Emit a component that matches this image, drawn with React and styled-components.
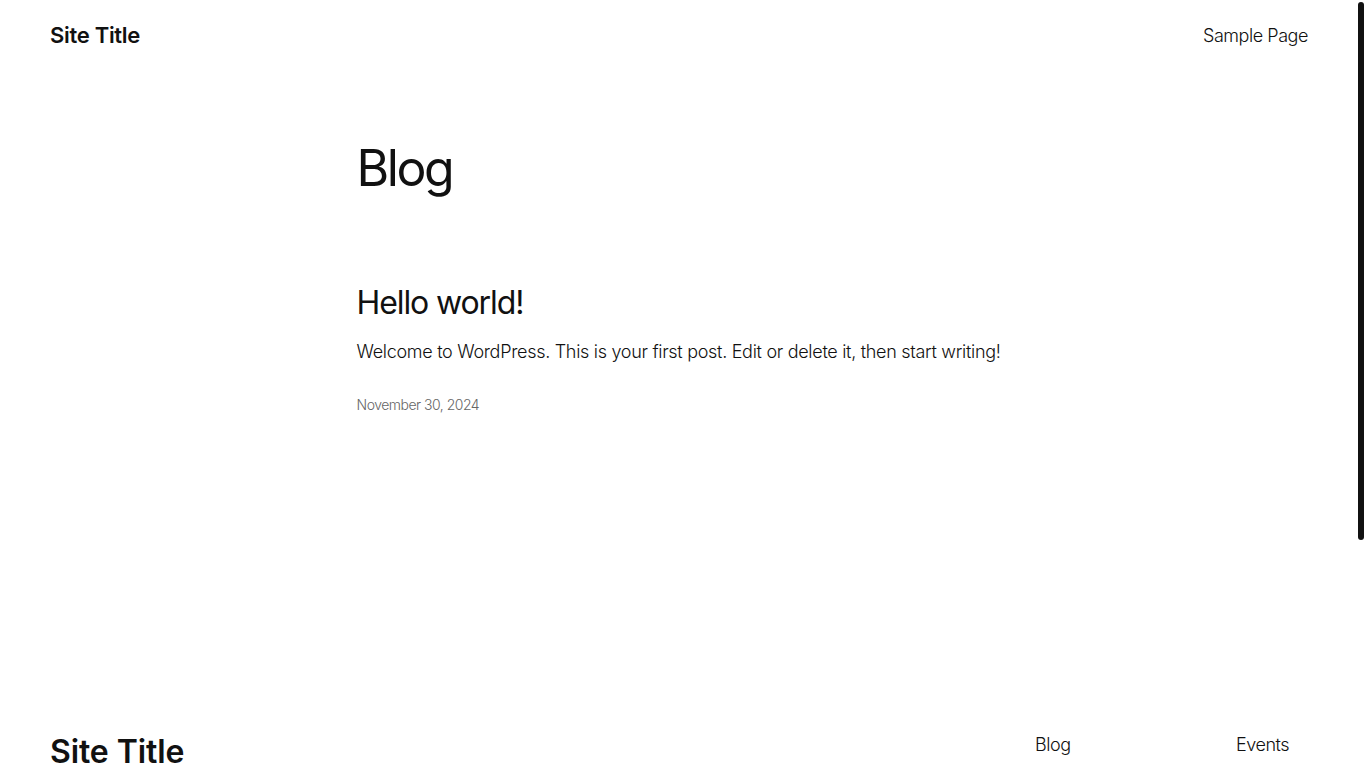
import styled, { createGlobalStyle } from 'styled-components';

const GlobalStyle = createGlobalStyle`
  body {
    margin: 0;
    background: #fff;
    color: #111;
    font-family: Inter, 'Noto Sans', sans-serif;
    font-weight: 300;
    font-size: 18px;
    -webkit-font-smoothing: antialiased;
  }

  a {
    color: inherit;
    text-decoration: none;
  }
`;

// the page keeps an 8px gutter on the right for the scroll track
const Page = styled.div`
  margin-right: 8px;
`;

const ScrollThumb = styled.div`
  position: fixed;
  top: 2px;
  right: 2px;
  width: 6px;
  height: 538px;
  border-radius: 3px;
  background: #111;
`;

const Header = styled.header`
  display: flex;
  justify-content: space-between;
  align-items: center;
  padding: 20px 50px;
  height: 30px;
`;

const SiteTitle = styled.a`
  font-size: ${(props) => (props.large ? '32px' : '22px')};
  font-weight: 600;
  line-height: 1.1;
  letter-spacing: ${(props) => (props.large ? '-0.1px' : '-0.3px')};
`;

const NavLink = styled.a`
  font-size: 18px;
  font-weight: 300;
  letter-spacing: -0.45px;
`;

const Main = styled.main`
  width: 645px;
  margin: 0 auto;
  padding: 68px 0 0;
  min-height: 576px;
`;

const PageTitle = styled.h1`
  margin: 0 0 86px;
  font-size: 50px;
  font-weight: 400;
  line-height: 1.2;
  letter-spacing: -2.4px;
`;

const Post = styled.article`
  display: flex;
  flex-direction: column;
`;

const PostTitle = styled.h2`
  margin: 0;
  font-size: 32px;
  font-weight: 400;
  line-height: 1.2;
  letter-spacing: -1.1px;
`;

const Excerpt = styled.p`
  margin: 16px 0 0;
  font-size: 18px;
  line-height: 1.6;
  letter-spacing: -0.3px;
`;

const PostDate = styled.time`
  margin-top: 29px;
  font-size: 14px;
  color: #666;
  letter-spacing: -0.5px;
`;

const Footer = styled.footer`
  display: flex;
  justify-content: space-between;
  align-items: flex-start;
  padding: 20px 50px 120px;
`;

const FooterNav = styled.nav`
  display: flex;
  gap: 131px;
  padding-right: 2px;
`;

const NavColumn = styled.ul`
  list-style: none;
  margin: 0;
  padding: 0;
  display: flex;
  flex-direction: column;
  gap: 14px;
  min-width: 70px;
`;

const App = () => {
  const columns = [
    ['Blog', 'About', 'FAQs', 'Authors'],
    ['Events', 'Shop', 'Patterns', 'Themes'],
  ];

  return (
    <>
      <GlobalStyle />
      <ScrollThumb />
      <Page>
        <Header>
          <SiteTitle href="#">Site Title</SiteTitle>
          <NavLink href="#">Sample Page</NavLink>
        </Header>
        <Main>
          <PageTitle>Blog</PageTitle>
          <Post>
            <PostTitle>Hello world!</PostTitle>
            <Excerpt>
              Welcome to WordPress. This is your first post. Edit or delete it,
              then start writing!
            </Excerpt>
            <PostDate>November 30, 2024</PostDate>
          </Post>
        </Main>
        <Footer>
          <SiteTitle href="#" large>
            Site Title
          </SiteTitle>
          <FooterNav>
            {columns.map((items) => (
              <NavColumn key={items[0]}>
                {items.map((item) => (
                  <li key={item}>
                    <NavLink href="#">{item}</NavLink>
                  </li>
                ))}
              </NavColumn>
            ))}
          </FooterNav>
        </Footer>
      </Page>
    </>
  );
};

export default App;
